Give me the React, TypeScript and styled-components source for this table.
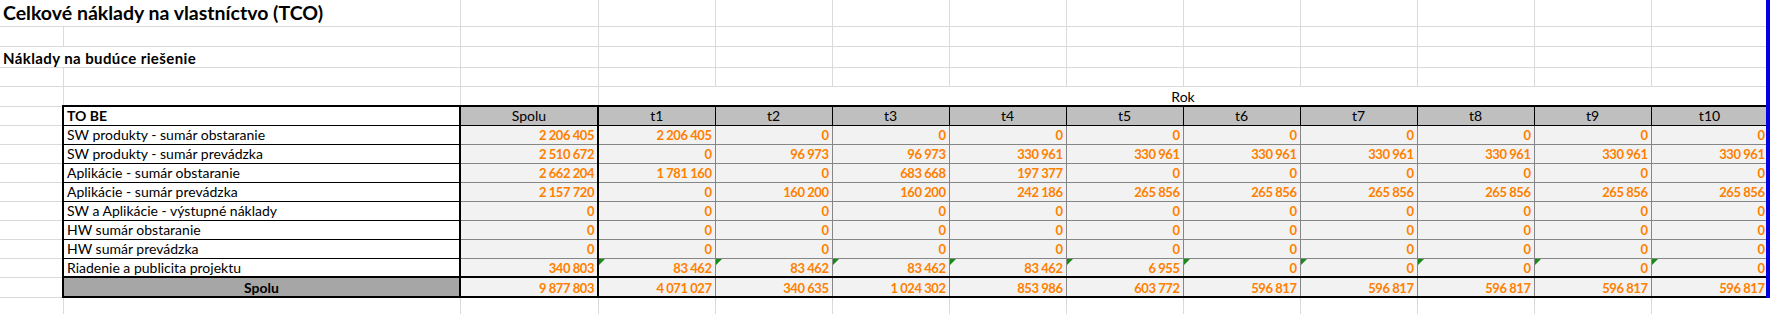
import React from "react";
import styled, { createGlobalStyle, css } from "styled-components";

const GRID = "#dadada";
const INNER = "#868686";
const INK = "#000000";
const ORANGE = "#ff8000";
const FONT = `Lato, "Liberation Sans", Arial, sans-serif`;

const GlobalStyle = createGlobalStyle`
  html, body { margin: 0; padding: 0; background: #ffffff; }
  body { font-family: ${FONT}; }
`;

const Viewport = styled.div`
  display: flex;
  align-items: flex-start;
  width: 1771px;
  height: 314px;
  overflow: hidden;
  background: #ffffff;
`;

const SheetClip = styled.div`
  flex: none;
  width: 1766px;
  height: 314px;
  overflow: hidden;
`;

const BlueEdge = styled.div`
  flex: none;
  width: 4px;
  height: 298px;
  background: #0000e0;
`;

const Sheet = styled.table`
  border-collapse: collapse;
  table-layout: fixed;
  width: 1768px;
  font-family: ${FONT};
  color: ${INK};
`;

const Row = styled.tr<{ $h: number }>`
  height: ${(p) => p.$h}px;
`;

const baseCell = css`
  padding: 0 3px;
  white-space: nowrap;
  overflow: hidden;
  vertical-align: middle;
  line-height: 16px;
  border: none;
`;

const GridCell = styled.td<{ $noBottom?: boolean }>`
  ${baseCell};
  border-right: 1px solid ${GRID};
  border-bottom: ${(p) => (p.$noBottom ? "none" : `1px solid ${GRID}`)};
`;

const TitleCell = styled.td`
  ${baseCell};
  font-size: 19.5px;
  font-weight: 700;
  line-height: 22px;
  padding-top: 1px;
  border-right: 1px solid ${GRID};
  border-bottom: 1px solid ${GRID};
`;

const SubtitleCell = styled.td`
  ${baseCell};
  font-size: 15px;
  font-weight: 700;
  letter-spacing: 0.4px;
  padding-top: 2px;
  border-right: 1px solid ${GRID};
  border-bottom: 1px solid ${GRID};
`;

const YearCaption = styled.td`
  ${baseCell};
  text-align: center;
  font-size: 14px;
  padding-top: 2px;
  border-right: 1px solid ${GRID};
`;

const SideCell = styled.td`
  ${baseCell};
  border-bottom: 1px solid ${GRID};
`;

const LabelCell = styled.td<{ $head?: boolean; $total?: boolean }>`
  ${baseCell};
  font-size: 14px;
  padding-top: 1px;
  border-left: 2px solid ${INK};
  border-right: 2px solid ${INK};
  border-bottom: 1px solid ${INK};
  ${(p) =>
    p.$head &&
    css`
      font-weight: 700;
      border-top: 2px solid ${INK};
    `}
  ${(p) =>
    p.$total &&
    css`
      font-weight: 700;
      text-align: center;
      background: #a6a6a6;
      border-top: 2px solid ${INK};
      border-bottom: 2px solid ${INK};
    `}
`;

const HeadCell = styled.td<{ $thick?: boolean }>`
  ${baseCell};
  text-align: center;
  font-size: 14px;
  padding-top: 1px;
  background: #bfbfbf;
  border-top: 2px solid ${INK};
  border-bottom: 1px solid ${INK};
  border-right: ${(p) => (p.$thick ? 2 : 1)}px solid ${INK};
  ${(p) => p.$thick && css`border-left: 2px solid ${INK};`}
`;

const NumCell = styled.td<{ $thick?: boolean; $total?: boolean; $flag?: boolean }>`
  ${baseCell};
  position: relative;
  text-align: right;
  font-size: 13px;
  font-weight: 700;
  letter-spacing: -0.45px;
  padding-top: 1px;
  color: ${ORANGE};
  background: #f2f2f2;
  border-right: ${(p) => (p.$thick ? `2px solid ${INK}` : `1px solid ${INNER}`)};
  border-bottom: 1px solid ${INNER};
  ${(p) => p.$thick && css`border-left: 2px solid ${INK};`}
  ${(p) =>
    p.$total &&
    css`
      border-top: 2px solid ${INK};
      border-bottom: 2px solid ${INK};
    `}
  ${(p) =>
    p.$flag &&
    css`
      &::before {
        content: "";
        position: absolute;
        left: 0;
        top: 0;
        width: 0;
        height: 0;
        border-top: 6px solid #178a17;
        border-right: 6px solid transparent;
      }
    `}
`;

const years = ["t1", "t2", "t3", "t4", "t5", "t6", "t7", "t8", "t9", "t10"];
const zeros = years.map(() => "0");

type Line = { label: string; total: string; values: string[]; flagged?: boolean };

const lines: Line[] = [
  {
    label: "SW produkty - sumár obstaranie",
    total: "2 206 405",
    values: ["2 206 405", "0", "0", "0", "0", "0", "0", "0", "0", "0"],
  },
  {
    label: "SW produkty - sumár prevádzka",
    total: "2 510 672",
    values: ["0", "96 973", "96 973", "330 961", "330 961", "330 961", "330 961", "330 961", "330 961", "330 961"],
  },
  {
    label: "Aplikácie - sumár obstaranie",
    total: "2 662 204",
    values: ["1 781 160", "0", "683 668", "197 377", "0", "0", "0", "0", "0", "0"],
  },
  {
    label: "Aplikácie - sumár prevádzka",
    total: "2 157 720",
    values: ["0", "160 200", "160 200", "242 186", "265 856", "265 856", "265 856", "265 856", "265 856", "265 856"],
  },
  { label: "SW a Aplikácie - výstupné náklady", total: "0", values: zeros },
  { label: "HW sumár obstaranie", total: "0", values: zeros },
  { label: "HW sumár prevádzka", total: "0", values: zeros },
  {
    label: "Riadenie a publicita projektu",
    total: "340 803",
    values: ["83 462", "83 462", "83 462", "83 462", "6 955", "0", "0", "0", "0", "0"],
    flagged: true,
  },
];

const grandTotal: Line = {
  label: "Spolu",
  total: "9 877 803",
  values: ["4 071 027", "340 635", "1 024 302", "853 986", "603 772", "596 817", "596 817", "596 817", "596 817", "596 817"],
};

const colWidths = [63, 397, 138, ...years.map(() => 117)];

const EmptyYears: React.FC<{ noBottom?: boolean }> = ({ noBottom }) => (
  <>
    {years.map((y) => (
      <GridCell key={y} $noBottom={noBottom} />
    ))}
  </>
);

export default function App() {
  return (
    <>
      <GlobalStyle />
      <Viewport>
        <SheetClip>
          <Sheet>
            <colgroup>
              {colWidths.map((w, i) => (
                <col key={i} style={{ width: w }} />
              ))}
            </colgroup>
            <tbody>
              <Row $h={26}>
                <TitleCell colSpan={2}>Celkové náklady na vlastníctvo (TCO)</TitleCell>
                <GridCell />
                <EmptyYears />
              </Row>
              <Row $h={20}>
                <GridCell />
                <GridCell />
                <GridCell />
                <EmptyYears />
              </Row>
              <Row $h={21}>
                <SubtitleCell colSpan={2}>Náklady na budúce riešenie</SubtitleCell>
                <GridCell />
                <EmptyYears />
              </Row>
              <Row $h={19}>
                <GridCell />
                <GridCell />
                <GridCell />
                <EmptyYears />
              </Row>
              <Row $h={20}>
                <GridCell />
                <GridCell />
                <GridCell />
                <YearCaption colSpan={10}>Rok</YearCaption>
              </Row>
              <Row $h={19}>
                <SideCell />
                <LabelCell $head>TO BE</LabelCell>
                <HeadCell $thick>Spolu</HeadCell>
                {years.map((y) => (
                  <HeadCell key={y}>{y}</HeadCell>
                ))}
              </Row>
              {lines.map((line) => (
                <Row $h={19} key={line.label}>
                  <SideCell />
                  <LabelCell>{line.label}</LabelCell>
                  <NumCell $thick>{line.total}</NumCell>
                  {line.values.map((v, i) => (
                    <NumCell key={i} $flag={line.flagged}>
                      {v}
                    </NumCell>
                  ))}
                </Row>
              ))}
              <Row $h={20}>
                <SideCell />
                <LabelCell $total>{grandTotal.label}</LabelCell>
                <NumCell $thick $total>
                  {grandTotal.total}
                </NumCell>
                {grandTotal.values.map((v, i) => (
                  <NumCell key={i} $total>
                    {v}
                  </NumCell>
                ))}
              </Row>
              <Row $h={20}>
                <GridCell $noBottom />
                <GridCell $noBottom />
                <GridCell $noBottom />
                <EmptyYears noBottom />
              </Row>
            </tbody>
          </Sheet>
        </SheetClip>
        <BlueEdge />
      </Viewport>
    </>
  );
}
